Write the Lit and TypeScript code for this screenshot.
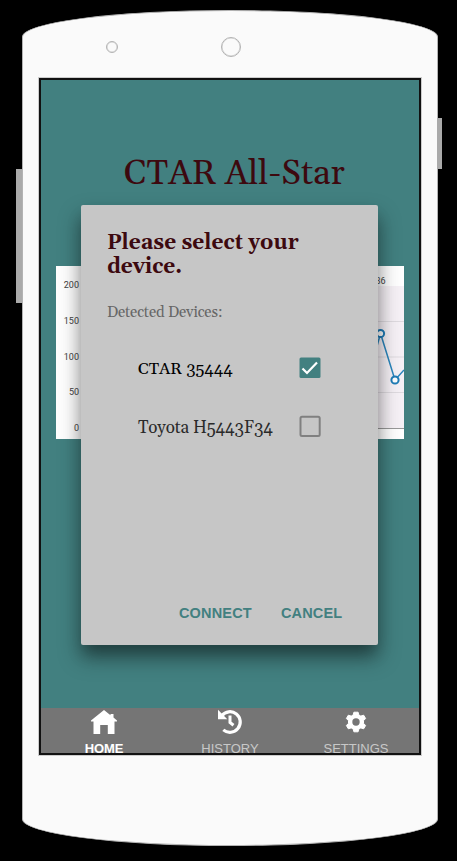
import { LitElement, html, css, svg } from "lit";
import { customElement, property, state } from "lit/decorators.js";
import { classMap } from "lit/directives/class-map.js";

const serif = css`Georgia, Gelasio, "Liberation Serif", serif`;
const sans = css`"Liberation Sans", Arial, sans-serif`;

@customElement("history-chart")
class HistoryChart extends LitElement {
  static styles = css`
    :host { display: block; height: 173px; }
    svg { display: block; width: 100%; height: 100%; background: #fff; }
    .label { font: 9px Roboto, ${sans}; fill: #444; }
    .plot { fill: #f6f1f6; }
    .grid { stroke: #dfdbe0; stroke-width: 1; }
    .axis { stroke: #999; stroke-width: 1; }
    .line { fill: none; stroke: #2b86bd; stroke-width: 1.5; }
    .dot { fill: #fff; stroke: #1f7db8; stroke-width: 2; }
  `;

  render() {
    const rows = [200, 150, 100, 50, 0];
    return html`<svg viewBox="0 0 348 173">
      <rect class="plot" x="27" y="20" width="321" height="142"></rect>
      ${rows.map((v, i) => svg`
        <text class="label" x="23" y=${22.3 + i * 35.7} text-anchor="end">${v}</text>`)}
      ${[55.5, 91, 126.5].map((y) => svg`<path class="grid" d="M27 ${y}H348"></path>`)}
      <path class="axis" d="M27 162.5H348"></path>
      <text class="label" x="329.500" y="18" text-anchor="end">36</text>
      <path class="line" d="M310 120L324.500 67.500L339 114L348 104"></path>
      <circle class="dot" cx="324.500" cy="67.500" r="3.600"></circle>
      <circle class="dot" cx="339" cy="114" r="3.600"></circle>
    </svg>`;
  }
}

@customElement("device-row")
class DeviceRow extends LitElement {
  @property() name = "";
  @property({ type: Boolean }) checked = false;

  static styles = css`
    :host { display: flex; justify-content: space-between; align-items: center; height: 58px; }
    .name { font: 16.800px/20px ${serif}; color: #000; white-space: nowrap; padding-top: 1px; }
    .name.idle { font-size: 17px; letter-spacing: -.1px; color: #2a2a2a; padding-top: 3px; }
    .box { display: block; width: 22px; height: 22px; }
    .fill { fill: #428080; }
    .tick { fill: none; stroke: #fff; stroke-width: 2.200; }
    .empty { fill: none; stroke: #808080; stroke-width: 2; }
  `;

  render() {
    return html`
      <span class=${classMap({ name: true, idle: !this.checked })}>${this.name}</span>
      <svg class="box" viewBox="0 0 22 22">
        ${this.checked
          ? svg`<rect class="fill" x="0.500" y="0.500" width="21" height="20.500" rx="1.500"></rect>
                <path class="tick" d="M3.500 11.500L8 16L18 5.500"></path>`
          : svg`<rect class="empty" x="1.500" y="1.700" width="19.200" height="19.200" rx="1.500"></rect>`}
      </svg>`;
  }
}

@customElement("app-root")
class AppRoot extends LitElement {
  @state() private devices = [
    { name: "CTAR 35444", checked: true },
    { name: "Toyota H5443F34", checked: false },
  ];

  static styles = css`
    :host { display: block; height: 861px; background: #000; overflow: hidden; }
    * { box-sizing: border-box; }
    .stage { height: 861px; padding: 10px 19px 15px 22px; }
    .phone {
      position: relative; height: 836px; display: flex; flex-direction: column;
      padding: 0 16px; background: #fafafa; border: 1px solid #b3b3b3;
      border-radius: 50% / 27px;
    }
    .key { position: absolute; background: #aaa; }
    .volume { left: -7px; top: 158px; width: 6px; height: 134px; }
    .power { right: -5px; top: 107px; width: 5px; height: 51px; }
    .sensors { height: 67px; display: flex; align-items: center; gap: 103px; padding: 5px 0 0 67px; }
    .ring { border: 1.500px solid #b3b3b3; box-shadow: inset 0 0 0 .5px #ccc; border-radius: 50%; }
    .small { width: 12px; height: 12px; }
    .large { width: 20px; height: 20px; }
    .screen {
      position: relative; height: 677px; width: 382px; display: flex; flex-direction: column;
      overflow: hidden; background: #428080; border: 2px solid #111; outline: 1px solid #ccc;
      outline-offset: 0;
    }
    .page { flex: 1; padding: 0 15px; }
    .brand {
      margin: 0; height: 186px; padding: 74px 0 0 9px; text-align: center;
      font: 400 35px/40px ${serif}; color: #3d090f; white-space: nowrap;
    }
    .dialog {
      position: absolute; left: 40.400px; top: 125px; width: 296.500px; height: 440px;
      display: flex; flex-direction: column; padding: 26px 26px 16px 25.500px; border-radius: 2px;
      background: #c6c6c6;
      box-shadow: 0 11px 15px -3px rgba(0,0,0,.32), 0 12px 22px 2px rgba(0,0,0,.30);
    }
    .heading { margin: 0; font: 700 21px/24px ${serif}; color: #3d090f; }
    .caption { margin: 23px 0 0; font: 15px/22px ${serif}; letter-spacing: -.15px; color: #666; }
    .list { padding: 15px 31px 0 31px; flex: 1; }
    .actions { display: flex; justify-content: flex-end; gap: 29px; padding-right: 9.500px; }
    .action {
      border: 0; padding: 0; background: none; color: #428080;
      font: 700 14.500px/32px ${sans}; letter-spacing: .18px;
    }
    .tabs { height: 45px; display: flex; background: #757575; }
    .tab {
      flex: 1; display: flex; flex-direction: column; align-items: center;
      font: 13px/15px ${sans}; color: #c8c8c8;
    }
    .tab.active { color: #fff; font-weight: 700; letter-spacing: -.1px; }
    .icon { display: block; width: 28px; height: 28px; margin-bottom: 5px; flex: none; fill: #fff; }
    .stroke { fill: none; stroke: #fff; }
    .hole { fill: #757575; }
  `;

  private icons = {
    home: svg`<path d="M14 2L1 12.500V13.500H3.500V26H10.200V17H17.800V26H24.500V13.500H27V12.500L23.500 9.600V6H20.500V7.300Z"></path>`,
    history: svg`
      <path class="stroke" stroke-width="3.200" d="M5.800 7.700A10.300 10.300 0 1 1 7.300 21.900"></path>
      <path d="M2 1.800V11.200H11.300Z"></path>
      <path class="stroke" stroke-width="3" d="M14 7.500V14.500L17.500 17.200"></path>`,
    settings: svg`
      <g transform="translate(-.1 .5)">
        <path stroke="#fff" stroke-width="1" stroke-linejoin="round" d="M12 3.700H16.200L16.900 6.500L18.900 7.600L21.800 6.700L23.700 10L21.600 12.200V14.800L23.700 17L21.800 20.300L18.900 19.400L16.900 20.500L16.200 23.300H12L11.300 20.500L9.300 19.400L6.400 20.300L4.500 17L6.600 14.800V12.200L4.500 10L6.400 6.700L9.300 7.600L11.300 6.500Z"></path>
        <circle class="hole" cx="14.100" cy="13.500" r="3.700"></circle>
      </g>`,
  };

  private tab(label: string, icon: unknown, active = false) {
    return html`<div class=${classMap({ tab: true, active })}>
      <svg class="icon" viewBox="0 0 28 28">${icon}</svg>${label}
    </div>`;
  }

  render() {
    return html`<div class="stage"><div class="phone">
      <i class="key volume"></i><i class="key power"></i>
      <div class="sensors"><i class="ring small"></i><i class="ring large"></i></div>
      <div class="screen">
        <main class="page">
          <h1 class="brand">CTAR All-Star</h1>
          <history-chart></history-chart>
        </main>
        <nav class="tabs">
          ${this.tab("HOME", this.icons.home, true)}
          ${this.tab("HISTORY", this.icons.history)}
          ${this.tab("SETTINGS", this.icons.settings)}
        </nav>
        <section class="dialog">
          <h2 class="heading">Please select your device.</h2>
          <p class="caption">Detected Devices:</p>
          <div class="list">
            ${this.devices.map((d) => html`<device-row .name=${d.name} .checked=${d.checked}></device-row>`)}
          </div>
          <div class="actions">
            <button class="action">CONNECT</button><button class="action">CANCEL</button>
          </div>
        </section>
      </div>
    </div></div>`;
  }
}
